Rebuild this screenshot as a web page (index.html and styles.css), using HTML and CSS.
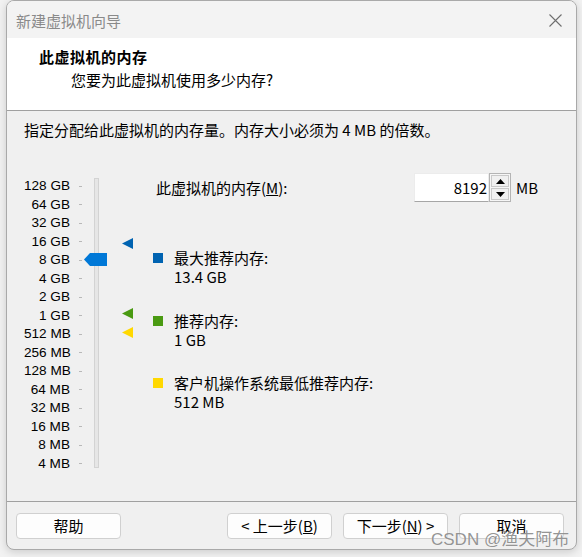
FILE: index.html
```html
<!DOCTYPE html>
<html lang="zh-CN">
<head>
<meta charset="utf-8">
<title>新建虚拟机向导</title>
<link rel="stylesheet" href="styles.css">
</head>
<body>
<div class="window">
  <div class="titlebar">
    <span class="title">新建虚拟机向导</span>
    <svg class="close" width="13" height="13" viewBox="0 0 13 13"><path d="M0.5 0.5 L12.5 12.5 M12.5 0.5 L0.5 12.5" stroke="#6f6f6f" stroke-width="1.1" fill="none"/></svg>
  </div>
  <div class="header">
    <div class="h-title">此虚拟机的内存</div>
    <div class="h-sub">您要为此虚拟机使用多少内存?</div>
  </div>
  <div class="content">
    <p class="intro">指定分配给此虚拟机的内存量。内存大小必须为 4 MB 的倍数。</p>
    <div class="main">
      <div class="scale">
        <div class="row"><span class="lbl">128 GB</span><span class="tick"></span></div>
        <div class="row"><span class="lbl">64 GB</span><span class="tick"></span></div>
        <div class="row"><span class="lbl">32 GB</span><span class="tick"></span></div>
        <div class="row"><span class="lbl">16 GB</span><span class="tick"></span></div>
        <div class="row"><span class="lbl">8 GB</span><span class="tick"></span></div>
        <div class="row"><span class="lbl">4 GB</span><span class="tick"></span></div>
        <div class="row"><span class="lbl">2 GB</span><span class="tick"></span></div>
        <div class="row"><span class="lbl">1 GB</span><span class="tick"></span></div>
        <div class="row"><span class="lbl">512 MB</span><span class="tick"></span></div>
        <div class="row"><span class="lbl">256 MB</span><span class="tick"></span></div>
        <div class="row"><span class="lbl">128 MB</span><span class="tick"></span></div>
        <div class="row"><span class="lbl">64 MB</span><span class="tick"></span></div>
        <div class="row"><span class="lbl">32 MB</span><span class="tick"></span></div>
        <div class="row"><span class="lbl">16 MB</span><span class="tick"></span></div>
        <div class="row"><span class="lbl">8 MB</span><span class="tick"></span></div>
        <div class="row"><span class="lbl">4 MB</span><span class="tick"></span></div>
      </div>
      <div class="slider">
        <div class="track"></div>
        <div class="thumb"></div>
        <div class="marker m-max"></div>
        <div class="marker m-rec"></div>
        <div class="marker m-min"></div>
      </div>
      <div class="right">
        <div class="mem-row">
          <span class="mem-label">此虚拟机的内存(<u>M</u>):</span>
          <span class="input">8192</span>
          <span class="spin">
            <span class="spin-btn"><svg width="9" height="5" viewBox="0 0 9 5"><path d="M4.5 0 L9 5 L0 5 Z" fill="#000"/></svg></span>
            <span class="spin-btn"><svg width="9" height="5" viewBox="0 0 9 5"><path d="M0 0 L9 0 L4.5 5 Z" fill="#000"/></svg></span>
          </span>
          <span class="unit">MB</span>
        </div>
        <div class="legend">
          <div class="item">
            <span class="sq sq-max"></span>
            <div class="item-text"><div>最大推荐内存:</div><div>13.4 GB</div></div>
          </div>
          <div class="item">
            <span class="sq sq-rec"></span>
            <div class="item-text"><div>推荐内存:</div><div>1 GB</div></div>
          </div>
          <div class="item">
            <span class="sq sq-min"></span>
            <div class="item-text"><div>客户机操作系统最低推荐内存:</div><div>512 MB</div></div>
          </div>
        </div>
      </div>
    </div>
  </div>
  <div class="footer">
    <button class="btn">帮助</button>
    <div class="btns-right">
      <button class="btn">&lt; 上一步(<u>B</u>)</button>
      <button class="btn">下一步(<u>N</u>) &gt;</button>
      <button class="btn">取消</button>
    </div>
  </div>
</div>
<div class="watermark">CSDN @渔夫阿布</div>
</body>
</html>
```
FILE: styles.css
```css
* { box-sizing: border-box; }

body {
  margin: 0;
  width: 582px;
  height: 557px;
  overflow: hidden;
  position: relative;
  background: #f2f2f2;
  font-family: "Noto Sans CJK SC", "Noto Sans", sans-serif;
  font-size: 15px;
  color: #000;
}

.window {
  margin-left: 6px;
  width: 571px;
  height: 550px;
  border: 1px solid #a9a9a9;
  border-radius: 8px;
  background: #f0f0f0;
  display: flex;
  flex-direction: column;
  overflow: hidden;
  box-shadow: 0 2px 8px rgba(0, 0, 0, 0.16);
}

.titlebar {
  height: 37px;
  flex: none;
  background: #f3f3f3;
  display: flex;
  align-items: center;
  justify-content: space-between;
  padding: 2px 14px 0 9px;
}

.title {
  color: #8a8a8a;
  line-height: 20px;
}

.close { display: block; margin-top: -1px; }

.header {
  height: 73px;
  flex: none;
  background: #fff;
  border-bottom: 1px solid #a0a0a0;
  padding: 9px 0 0 32px;
}

.h-title {
  font-weight: bold;
  line-height: 20px;
  letter-spacing: 0.5px;
}

.h-sub {
  line-height: 20px;
  margin-top: 3px;
  padding-left: 32px;
}

.content {
  flex: 1;
  padding: 9px 0 0 17px;
}

.intro {
  margin: 0;
  line-height: 20px;
}

.main {
  display: flex;
  margin-top: 33px;
}

.scale { padding-top: 4px; }

.row {
  display: flex;
  align-items: center;
  height: 18.5px;
}

.lbl {
  width: 46px;
  text-align: right;
  white-space: nowrap;
  font-family: "Liberation Sans", "Noto Sans", sans-serif;
  font-size: 13.6px;
  line-height: 16px;
  color: #000;
}

.tick {
  width: 3px;
  height: 1px;
  margin-left: 9px;
  background: #b8b8b8;
}

.slider {
  position: relative;
  width: 49px;
  margin-left: 2px;
}

.track {
  margin: 5px 0 0 10px;
  width: 5px;
  height: 290px;
  background: #e6e6e6;
  border: 1px solid #d3d3d3;
}

.thumb {
  position: absolute;
  left: 0;
  top: 80px;
  width: 23px;
  height: 13px;
  background: #0078d7;
  clip-path: polygon(0 50%, 6px 0, 100% 0, 100% 100%, 6px 100%);
}

.marker {
  position: absolute;
  left: 38px;
  width: 11px;
  height: 11px;
  clip-path: polygon(0 50%, 100% 0, 100% 100%);
}

.m-max { top: 65px; background: #0063b1; }
.m-rec { top: 135px; background: #4a9a12; }
.m-min { top: 154px; background: #ffd800; }

.right { margin-left: 20px; }

.mem-row {
  display: flex;
  align-items: center;
  height: 29px;
  padding-left: 3px;
}

.mem-label { width: 258px; }

.input {
  width: 75px;
  height: 29px;
  background: #fff;
  border: 1px solid #ececec;
  border-bottom-color: #a6a6a6;
  text-align: right;
  padding-right: 1px;
  line-height: 27px;
}

.spin {
  width: 22px;
  height: 29px;
  border: 1px solid #b4b4b4;
  background: #f6f6f6;
  display: flex;
  flex-direction: column;
  padding: 1px;
  gap: 1px;
}

.spin-btn {
  flex: 1;
  display: flex;
  align-items: center;
  justify-content: center;
  border: 1px solid #c9c9c9;
  background: #f0f0f0;
}

.spin-btn svg { display: block; }

.unit { margin-left: 5px; }

.legend { margin-top: 46px; }

.item { display: flex; }
.item + .item { margin-top: 24.5px; }

.sq {
  flex: none;
  width: 10px;
  height: 10px;
  margin-top: 5px;
  margin-right: 11px;
}

.sq-max { background: #0063b1; }
.sq-rec { background: #4a9a12; }
.sq-min { background: #ffd800; }

.item-text { line-height: 19px; }

.footer {
  height: 48px;
  flex: none;
  border-top: 1px solid #a0a0a0;
  display: flex;
  padding: 11px 12px 0 9px;
}

.btns-right {
  margin-left: auto;
  display: flex;
  gap: 11px;
}

.btn {
  width: 105px;
  height: 26px;
  padding: 0;
  background: #fdfdfd;
  border: 1px solid #d0d0d0;
  border-radius: 4px;
  font-family: "Noto Sans CJK SC", "Noto Sans", sans-serif;
  font-size: 15px;
  color: #000;
  line-height: 22px;
}

.watermark {
  position: absolute;
  left: 431px;
  top: 530px;
  line-height: 20px;
  font-family: "Liberation Sans", "Noto Sans CJK SC", sans-serif;
  font-size: 17px;
  color: rgba(120, 120, 120, 0.8);
  text-shadow: 0 0 1px rgba(255, 255, 255, 0.8);
  white-space: nowrap;
}
```
